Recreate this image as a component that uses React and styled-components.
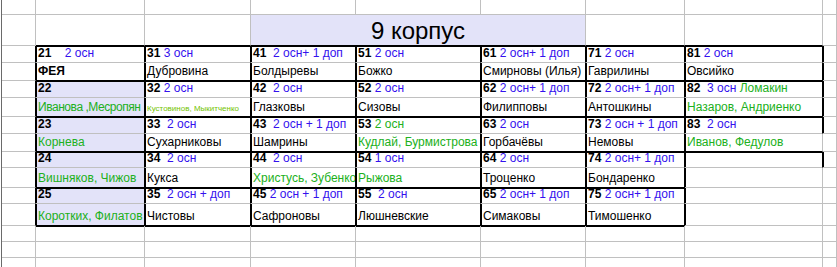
import React from "react";
import styled, { createGlobalStyle } from "styled-components";

const GlobalStyle = createGlobalStyle`
  html, body {
    margin: 0;
    padding: 0;
    background: #fff;
  }
  body {
    font-family: "Liberation Sans", Arial, sans-serif;
  }
`;

// column widths and row heights of the visible sheet area
const COLS = [34, 109, 106, 105, 125, 105, 99, 138];
const ROWS = [15, 31, 17, 18, 17, 19, 17, 18, 16, 20, 16, 22, 16, 16, 16];

const GRID = "#c0c0c0";
const FILL = "#e3e3f9";

const TONES = {
  b: "#000",
  p: "#000",
  n: "#3311ee",
  g: "#20b020",
  gs: "#20b020",
  t: "#74c400",
};

const Sheet = styled.div`
  margin-left: 1px;
  border-left: 1px solid #6a6a6a;
  height: 267px;
  overflow: hidden;
  display: grid;
  grid-template-columns: ${COLS.map((w) => w + "px").join(" ")} 1fr;
  grid-template-rows: ${ROWS.map((h) => h + "px").join(" ")};
`;

const Cell = styled.div`
  box-sizing: border-box;
  grid-column: span ${({ $span }) => $span || 1};
  display: flex;
  align-items: flex-end;
  padding: 0 0 2px 2px;
  border-right: 1px solid ${({ $right }) => ($right ? "#000" : GRID)};
  border-bottom: 1px solid ${({ $bottom }) => ($bottom ? "#000" : GRID)};
  box-shadow: ${({ $left, $top }) =>
    [$left && "inset 1px 0 0 #000", $top && "inset 0 1px 0 #000"]
      .filter(Boolean)
      .join(", ") || "none"};
  background: ${({ $fill }) => ($fill ? FILL : "#fff")};
  overflow: hidden;
  white-space: pre;
  font-size: 12px;
  line-height: 14px;
  color: #000;
`;

const Title = styled(Cell)`
  justify-content: center;
  padding: 0;
  font-size: 24px;
  line-height: 28px;
`;

const Run = styled.span`
  font-weight: ${({ $tone }) => ($tone === "b" ? 700 : 400)};
  font-size: ${({ $tone }) => ($tone === "t" ? "8px" : "inherit")};
  line-height: ${({ $tone }) => ($tone === "t" ? "10px" : "inherit")};
  letter-spacing: ${({ $tone }) => ($tone === "gs" ? "-0.45px" : "normal")};
  color: ${({ $tone }) => TONES[$tone]};
`;

const apt = (n, note, name, nameTone = "p", noteTone = "n", extra) => {
  const top = [[n, "b"]];
  if (note) top.push([note, noteTone]);
  if (extra) top.push(extra);
  return { top, bottom: [[name, nameTone]] };
};

const DATA = [
  [
    apt("21", "    2 осн", "ФЕЯ", "b"),
    apt("22", "", "Иванова ,Месропян", "gs"),
    apt("23", "", "Корнева", "g"),
    apt("24", "", "Вишняков, Чижов", "g"),
    apt("25", "", "Коротких, Филатов", "g"),
  ],
  [
    apt("31", " 3 осн", "Дубровина"),
    apt("32", " 2 осн", "Кустовинов, Мыкитченко", "t"),
    apt("33", "  2 осн", "Сухарниковы"),
    apt("34", "  2 осн", "Кукса"),
    apt("35", "  2 осн + доп", "Чистовы"),
  ],
  [
    apt("41", "  2 осн+ 1 доп", "Болдыревы"),
    apt("42", "  2 осн", "Глазковы"),
    apt("43", "  2 осн + 1 доп", "Шамрины"),
    apt("44", "  2 осн", "Христусь, Зубенко", "g"),
    apt("45", " 2 осн + 1 доп", "Сафроновы"),
  ],
  [
    apt("51", " 2 осн", "Божко"),
    apt("52", " 2 осн", "Сизовы"),
    apt("53", " 2 осн", "Кудлай, Бурмистрова", "g", "g"),
    apt("54", " 1 осн", "Рыжова", "g"),
    apt("55", "  2 осн", "Люшневские"),
  ],
  [
    apt("61", " 2 осн+ 1 доп", "Смирновы (Илья)"),
    apt("62", " 2 осн+ 1 доп", "Филипповы"),
    apt("63", " 2 осн", "Горбачёвы"),
    apt("64", " 2 осн", "Троценко"),
    apt("65", " 2 осн+ 1 доп", "Симаковы"),
  ],
  [
    apt("71", " 2 осн", "Гаврилины"),
    apt("72", " 2 осн+ 1 доп", "Антошкины"),
    apt("73", " 2 осн + 1 доп", "Немовы"),
    apt("74", " 2 осн+ 1 доп", "Бондаренко"),
    apt("75", " 2 осн+ 1 доп", "Тимошенко"),
  ],
  [
    apt("81", " 2 осн", "Овсийко"),
    apt("82", "  3 осн", "Назаров, Андриенко", "g", "n", [" Ломакин", "g"]),
    apt("83", "  2 осн", "Иванов, Федулов", "g"),
  ],
];

// thick border after column c in row r
const thickV = (r, c) => {
  if (c === 7) return (r >= 2 && r <= 6) || r === 8;
  return c >= 0 && c <= 6 && r >= 2 && r <= 11;
};

// thick border under row r in column c
const thickH = (r, c) => {
  if (c === 7) return [1, 3, 5, 7].includes(r);
  return c >= 1 && c <= 6 && [1, 3, 5, 7, 9, 11].includes(r);
};

const cellContent = (r, c) => {
  if (r < 2 || r > 11 || c < 1 || c > 7) return null;
  const item = DATA[c - 1][(r - 2) >> 1];
  if (!item) return null;
  const runs = (r - 2) % 2 === 0 ? item.top : item.bottom;
  return runs.map(([text, tone], i) => (
    <Run key={i} $tone={tone}>
      {text}
    </Run>
  ));
};

const App = () => {
  const cells = [];
  ROWS.forEach((_, r) => {
    for (let c = 0; c <= 8; c++) {
      if (r === 1 && (c === 4 || c === 5)) continue;
      const props = {
        key: `${r}-${c}`,
        $right: thickV(r, r === 1 && c === 3 ? 5 : c),
        $left: c > 0 && thickV(r, c - 1),
        $bottom: thickH(r, c),
        $top: r > 0 && thickH(r - 1, c),
        $fill: (c === 1 && r >= 4 && r <= 11) || (r === 1 && c === 3),
      };
      if (r === 1 && c === 3) {
        cells.push(
          <Title {...props} $span={3}>
            9 корпус
          </Title>
        );
      } else {
        cells.push(<Cell {...props}>{cellContent(r, c)}</Cell>);
      }
    }
  });

  return (
    <>
      <GlobalStyle />
      <Sheet>{cells}</Sheet>
    </>
  );
};

export default App;
